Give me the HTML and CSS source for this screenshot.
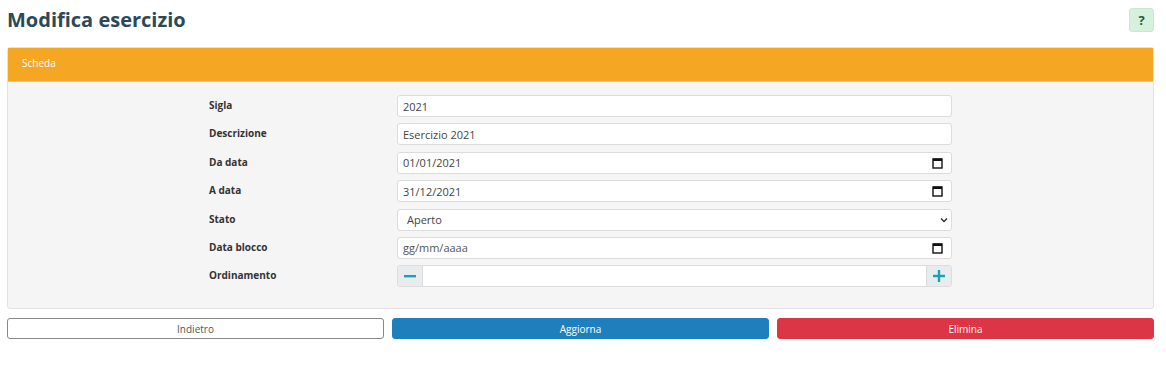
FILE: index.html
```html
<!DOCTYPE html>
<html lang="it">

<head>
    <meta charset="UTF-8">
    <meta name="viewport" content="width=device-width, initial-scale=1.0">
    <title>Modifica esercizio</title>
    <link rel="stylesheet" href="styles.css">
</head>

<body>
    <div class="page">
        <div class="page-header">
            <h1>Modifica esercizio</h1>
            <button class="help-btn" type="button">?</button>
        </div>

        <div class="card">
            <div class="card-header">Scheda</div>
            <div class="card-body">
                <form class="form-grid">
                    <label for="sigla">Sigla</label>
                    <div class="field">
                        <input type="text" id="sigla" value="2021">
                    </div>

                    <label for="descrizione">Descrizione</label>
                    <div class="field">
                        <input type="text" id="descrizione" value="Esercizio 2021">
                    </div>

                    <label for="da-data">Da data</label>
                    <div class="field">
                        <input type="text" id="da-data" value="01/01/2021">
                        <svg class="cal-icon" width="11" height="12" viewBox="0 0 11 12"><rect x="1" y="2" width="9" height="9" fill="none" stroke="#111" stroke-width="1.4"/><rect x="1" y="1.5" width="9" height="2.5" fill="#111"/></svg>
                    </div>

                    <label for="a-data">A data</label>
                    <div class="field">
                        <input type="text" id="a-data" value="31/12/2021">
                        <svg class="cal-icon" width="11" height="12" viewBox="0 0 11 12"><rect x="1" y="2" width="9" height="9" fill="none" stroke="#111" stroke-width="1.4"/><rect x="1" y="1.5" width="9" height="2.5" fill="#111"/></svg>
                    </div>

                    <label for="stato">Stato</label>
                    <div class="field select-field">
                        <span class="select-value" id="stato">Aperto</span>
                        <svg class="chevron" width="8" height="6" viewBox="0 0 8 6"><path d="M1 1.5 L4 4.5 L7 1.5" fill="none" stroke="#333" stroke-width="1.4"/></svg>
                    </div>

                    <label for="data-blocco">Data blocco</label>
                    <div class="field">
                        <input type="text" id="data-blocco" placeholder="gg/mm/aaaa">
                        <svg class="cal-icon" width="11" height="12" viewBox="0 0 11 12"><rect x="1" y="2" width="9" height="9" fill="none" stroke="#111" stroke-width="1.4"/><rect x="1" y="1.5" width="9" height="2.5" fill="#111"/></svg>
                    </div>

                    <label for="ordinamento">Ordinamento</label>
                    <div class="field spinner">
                        <span class="spin-btn">
                            <svg width="12" height="12" viewBox="0 0 12 12"><rect x="0" y="5" width="12" height="2.4" fill="#17a2b8"/></svg>
                        </span>
                        <input type="text" id="ordinamento">
                        <span class="spin-btn right">
                            <svg width="12" height="12" viewBox="0 0 12 12"><rect x="0" y="4.8" width="12" height="2.4" fill="#17a2b8"/><rect x="4.8" y="0" width="2.4" height="12" fill="#17a2b8"/></svg>
                        </span>
                    </div>
                </form>
            </div>
        </div>

        <div class="actions">
            <button class="btn btn-back" type="button">Indietro</button>
            <button class="btn btn-update" type="button">Aggiorna</button>
            <button class="btn btn-delete" type="button">Elimina</button>
        </div>
    </div>
</body>

</html>
```

FILE: styles.css
```css
body {
    margin: 0;
    font-family: "Open Sans", Arial, sans-serif;
    background-color: #fff;
    color: #333;
}

.page {
    padding: 0 12px 0 7px;
}

/* Title row */
.page-header {
    display: flex;
    justify-content: space-between;
    align-items: center;
    height: 40px;
    margin-bottom: 7px;
}

h1 {
    margin: 0;
    font-size: 20px;
    font-weight: 700;
    color: #2c4957;
    line-height: 40px;
}

.help-btn {
    width: 25px;
    height: 24px;
    border: 1px solid #c9e8d3;
    border-radius: 3px;
    background-color: #d6f0de;
    color: #1f5a3c;
    font-family: "Open Sans", Arial, sans-serif;
    font-size: 13px;
    font-weight: 700;
    padding: 0;
    cursor: pointer;
}

/* Card */
.card {
    border: 1px solid #e3e3e3;
    border-radius: 3px;
    background-color: #f5f5f5;
}

.card-header {
    background-color: #f5a623;
    color: #fff;
    font-size: 10px;
    height: 33px;
    line-height: 31px;
    padding-left: 14px;
    border-bottom: 1px solid #f2c27a;
}

.card-body {
    padding: 13px 0 21px 0;
}

.form-grid {
    display: grid;
    grid-template-columns: 188px 555px;
    row-gap: 6.4px;
    padding-left: 201px;
    align-items: center;
}

.form-grid label {
    font-size: 10px;
    font-weight: 700;
    color: #333;
    padding-bottom: 2px;
}

.field {
    display: flex;
    align-items: center;
    height: 22px;
    box-sizing: border-box;
    border: 1px solid #dcdcdc;
    border-radius: 3px;
    background-color: #fff;
}

.field input {
    flex: 1;
    min-width: 0;
    height: 100%;
    border: none;
    outline: none;
    background: transparent;
    padding: 0 0 0 5px;
    font-family: "Open Sans", Arial, sans-serif;
    font-size: 11px;
    color: #444;
}

.field input::placeholder {
    color: #555;
}

.cal-icon {
    margin-right: 8px;
}

.select-value {
    flex: 1;
    padding-left: 9px;
    font-size: 11px;
    color: #444;
}

.chevron {
    margin-right: 3px;
}

.spinner {
    overflow: hidden;
}

.spin-btn {
    display: flex;
    align-items: center;
    justify-content: center;
    width: 24px;
    height: 100%;
    background-color: #e9ecef;
    border-right: 1px solid #dcdcdc;
}

.spin-btn.right {
    border-right: none;
    border-left: 1px solid #dcdcdc;
}

/* Bottom buttons */
.actions {
    display: grid;
    grid-template-columns: 1fr 1fr 1fr;
    gap: 8px;
    margin-top: 9px;
}

.btn {
    height: 21px;
    border-radius: 3px;
    font-family: "Open Sans", Arial, sans-serif;
    font-size: 10px;
    padding: 0;
    cursor: pointer;
}

.btn-back {
    background-color: #fff;
    border: 1px solid #888;
    color: #555;
}

.btn-update {
    background-color: #1f7fbd;
    border: 1px solid #1f7fbd;
    color: #fff;
}

.btn-delete {
    background-color: #dc3545;
    border: 1px solid #dc3545;
    color: #fff;
}
```
